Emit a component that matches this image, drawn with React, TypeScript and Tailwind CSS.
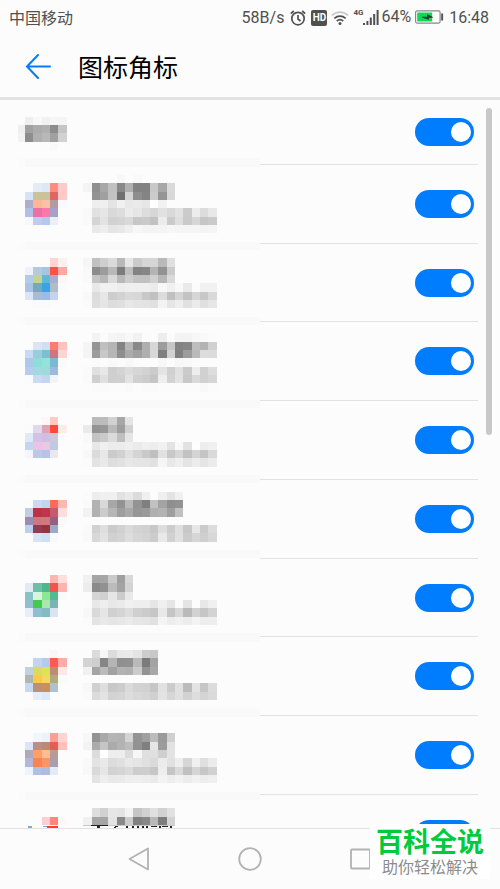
import React from "react";

type Strip = { row: number; icon?: string; text?: string };
type Item = { name: string; top: number; strips: Strip[]; band: number };

const CELL = 25 / 3;
const ICON_COL = 3;
const TEXT_COL = 10;

// Each token is one mosaic cell: two digits for a grey, six for a colour, "--" for none.
const items: Item[] = [
  {
    name: "应用 1",
    top: 165,
    band: 29,
    strips: [
      { row: 21, text: "-- -- -- -- f8 -- f9 -- -- fb" },
      { row: 22, icon: "-- e4ecf8 dde7f6 ff8a80 ffc9c7", text: "f4 8f a7 c0 88 b0 82 82 c8 a7 d9" },
      { row: 23, icon: "d4e3f5 c9c29a c9c29a dc6662 ffc9c7", text: "fb 93 a0 c2 70 d4 8d 84 cb 95 d8" },
      { row: 24, icon: "adaeca ffb694 f9c2a7 b59aa0 f8f9fd", text: "-- ee f0 e4 f1 e8 ea e6 ff f1" },
      { row: 25, icon: "b1c0e6 ec70a3 fb78a8 a7a0cb", text: "f9 e1 e6 d9 dd eb e6 dd d7 e1 d9 e2 cb ec dc e8" },
      { row: 26, icon: "f6f8fd bacfee b3caee eaeff8", text: "f9 d5 e3 d2 d4 d9 c7 ca c2 ec cb df ca d6 c6 ca" },
      { row: 27, text: "-- e9 ee e5 e8 ef f7 f4 f4 f4 f7 f5 f5 f5 f3 f5" },
    ],
  },
  {
    name: "应用 2",
    top: 244,
    band: 38,
    strips: [
      { row: 31, icon: "-- -- -- ffd4d2 fdf1f0", text: "f6 c1 cf da b8 e6 cb d6 d6 b9 df" },
      { row: 32, icon: "edf3f8 b3cae0 a5c5e0 ff5144 ffa8a3", text: "f9 8c 9c b8 7c be 83 87 b4 92 cb" },
      { row: 33, icon: "b2cbea c4d294 61b7d8 a9aecf fdf6f6", text: "f9 c5 b8 d8 b9 cc c2 c1 cf b7 d9" },
      { row: 34, icon: "abc3e3 74a8bb 38a3e9 aebdc9 fbfbfb", text: "-- e8 f1 f1 ed ef ef ef eb f7 f0 f8 e9 fb f1 f1" },
      { row: 35, icon: "dae5f6 a8bcd3 9cbce8 c4d4ea", text: "f9 dc e7 cd d2 d9 d7 c8 c0 dc c0 d4 c3 d6 c7 d9" },
      { row: 36, icon: "-- fa f9fafd", text: "fa de e5 dd df e7 e4 e3 e0 f3 e5 ee e1 eb e0 e6" },
    ],
  },
  {
    name: "应用 3",
    top: 322,
    band: 48,
    strips: [
      { row: 40, text: "-- f3 fb f5 f3 f8 f2 fb fc ed fb f3 f3 f7 f9 fb" },
      { row: 41, icon: "-- dae5f5 cfdff4 ff7a6f ffc2be", text: "f5 94 bf b4 83 b6 89 af d7 9c c5 82 86 bd b3 d0" },
      { row: 42, icon: "c9dbf2 9accdc 7bbfd0 cf7482 ffd5d3", text: "f4 9c c8 b6 8e ab a0 af d8 80 d2 80 9c ba dc db" },
      { row: 43, icon: "acc8ea 8bdfd8 92e3da 7ab9d5 fafafa", text: "-- fa fc f9 fb f8 fb fc fc f7 fc f7 f8 fb" },
      { row: 44, icon: "b5cced a1dae0 9fdcd9 9dbadd", text: "fa e0 e7 cf d4 dc d6 d2 cb e3 d0 e0 cb ed d1 dd" },
      { row: 45, icon: "fafbfd cadaf2 c2d5f1 f0f5fa", text: "fa cf df cf d0 e2 d0 cc c5 ee d2 e2 c8 d9 d0 d6" },
      { row: 46, text: "-- fa fa fb fb f9 fb fa fa fb fb fb fb fb f8 fb" },
    ],
  },
  {
    name: "应用 4",
    top: 401,
    band: 57,
    strips: [
      { row: 50, icon: "-- -- fcf6f5 ffc9c4", text: "-- bb bc d1 a7 e4" },
      { row: 51, icon: "fbfbfd e1d8ee e0a3b6 ff4938 ffece9", text: "ea 93 97 b9 9e d1" },
      { row: 52, icon: "e0e9f6 d3c2e6 d1bee4 cdc7da", text: "f9 c3 ca da bf e5" },
      { row: 53, icon: "c3d6f0 ebc4e5 edc6e3 bdcae6", text: "fb e7 f0 ec ec ef ea ef ed f1 e3 f8 e2 fd ed f0" },
      { row: 54, icon: "f5f6fb bac9eb b5c4e8 e9e8f1", text: "f8 db e8 cb d1 e0 d4 c9 bf e1 c8 d6 c2 d4 c4 d9" },
      { row: 55, text: "fb e3 e9 de e1 e7 e5 e4 e1 f6 e8 ee e4 ec e5 eb" },
    ],
  },
  {
    name: "应用 5",
    top: 480,
    band: 66,
    strips: [
      { row: 59, text: "fb ed f0 f0 e1 e9 dc f0 fc ef e3 f0" },
      { row: 60, icon: "fafbfd cbdaf1 c0d5f0 ff6a5d ffb7b2", text: "fa b2 d9 a7 92 b9 93 7f c1 a3 8f 92" },
      { row: 61, icon: "c2cde3 bd3148 be364b c25d70 fddedd", text: "f2 b1 cb b6 9e a9 96 9a b0 b3 9e c0" },
      { row: 62, icon: "9d8cb0 cf777d cf787d 966181 f8f9fb" },
      { row: 63, icon: "bccfeb 8f3c55 95343f a0a8c9", text: "fa d2 df cb d1 da d3 d1 c8 de cc df c7 e7 cb dc" },
      { row: 64, icon: "-- d8e4f4 cfdff5 f8f9fb", text: "f9 d8 e2 d1 d4 dd d6 d3 cc e9 d1 e0 cb d6 cf d8" },
    ],
  },
  {
    name: "应用 6",
    top: 559,
    band: 76,
    strips: [
      { row: 69, icon: "-- -- -- ffb5af ffdedb", text: "f1 a4 a6 ca 9f d8" },
      { row: 70, icon: "e3eaf6 6dc0a8 4eb78e ee564b ffb2ae", text: "ed 8b 92 bb a3 d3" },
      { row: 71, icon: "87c3c4 d7f5da 8ce893 53b990 fafafa", text: "-- d5 d0 e5 cb e8" },
      { row: 72, icon: "92bfd0 44cb4b a9e7b0 7bb4b4", text: "fb e8 ef e8 ea f0 ee ee e6 f0 e5 fb e4 fc e8 f0" },
      { row: 73, icon: "e8eef8 8dbfd0 82bbc2 dae3f2", text: "f8 d9 e5 d0 d4 dd d0 cb c6 e8 c5 d8 ba d2 c6 d3" },
      { row: 74, text: "fb e4 e9 e5 e7 ea e6 e5 e1 f4 ed f1 ec f3 ed ed" },
    ],
  },
  {
    name: "应用 7",
    top: 637,
    band: 85,
    strips: [
      { row: 78, icon: "-- -- -- fdf5f4", text: "-- db f7 dc e9 ea e4 cc c8" },
      { row: 79, icon: "fafbfd c3d4f0 b3cbec ff5a4c ffaba6", text: "d3 ce 86 b5 90 91 b9 7b a3" },
      { row: 80, icon: "c0d2e0 dcda5e dbe54c bb8d78 fde8e7", text: "f1 a5 bb a2 b3 b0 cb 93 a8" },
      { row: 81, icon: "adb5b5 f9ca4b f5d664 b2aa79 f9fafd" },
      { row: 82, icon: "c7d8f1 bc8f76 c9905e b2bfd2", text: "f8 d0 de c8 cc da d2 d1 c6 e1 cb e0 bb e3 c6 dc" },
      { row: 83, icon: "-- e7edf8 dfe8f6", text: "fa db e3 d3 d5 dd d8 d5 d0 e3 d6 e0 d2 dd d4 da" },
    ],
  },
  {
    name: "应用 8",
    top: 716,
    band: 95,
    strips: [
      { row: 88, icon: "-- f2f6fc ebf2fa ff9d97 ffd5d3", text: "f7 93 a9 b5 b3 d4 93 a0 bc 9a cf" },
      { row: 89, icon: "dae6f5 bd8e86 bb8b6b e75d55 ffbfbb", text: "f3 ab c5 ab b3 bc 92 80 e6 9c e2" },
      { row: 90, icon: "b1a8b9 ff9f62 febc93 b59d95", text: "-- dc ff ed ee dc f7 df e0 cf e3" },
      { row: 91, icon: "b0b9da f68454 fb9468 a89eac", text: "f9 e3 e9 dc e0 e8 e5 e0 da eb e1 ee d6 f0 df eb" },
      { row: 92, icon: "eff3fb b0c0e3 aebddd e4ebf7", text: "f8 d9 e5 d2 d5 da cd ce c6 ed c5 da c0 d5 c7 d1" },
      { row: 93, text: "-- e4 ee e9 ea ee ef ed ea f3 ee f2 ec f1 ed f0" },
    ],
  },
  {
    name: "应用 9",
    top: 795,
    band: 104,
    strips: [
      { row: 97, text: "-- dd d1 e6 e3 f3 c5 d1 e0 d1 e1" },
      { row: 98, icon: "-- -- f9cfcf ff857e fdf8f7", text: "f1 a5 a5 e3 89 cb 80 87 b8 7d d3" },
    ],
  },
];

const allSwitch: Item = {
  name: "全部",
  top: 100,
  band: 19,
  strips: [
    { row: 14, icon: "ef f8 f1 f6 f5" },
    { row: 15, icon: "a1 ab b0 8c c5" },
    { row: 16, icon: "8d b0 b8 a0 d1" },
    { row: 17, icon: "-- -- -- f9" },
  ],
};

function cells(source: string | undefined, row: number, firstCol: number) {
  if (!source) return null;
  return source.split(" ").map((token, i) => {
    if (token === "--") return null;
    return (
      <rect
        key={`${row}-${firstCol + i}`}
        x={(firstCol + i) * CELL}
        y={row * CELL}
        width={CELL}
        height={CELL}
        fill={`#${token.length === 2 ? token.repeat(3) : token}`}
      />
    );
  });
}

function Mosaic({ item, height, children }: { item: Item; height: number; children?: React.ReactNode }) {
  return (
    <svg
      width={260}
      height={height}
      viewBox={`0 ${item.top} 260 ${height}`}
      shapeRendering="crispEdges"
      className="block shrink-0 overflow-visible"
      aria-hidden="true"
    >
      <rect x={18} y={item.band * CELL} width={7} height={CELL} fill="#fbfbfb" />
      <rect x={25} y={item.band * CELL} width={235} height={CELL} fill="#f9f9f9" />
      {item.strips.map((s) => (
        <g key={s.row}>
          {cells(s.icon, s.row, ICON_COL)}
          {cells(s.text, s.row, TEXT_COL)}
        </g>
      ))}
      {children}
    </svg>
  );
}

function Toggle({ label }: { label: string }) {
  return (
    <input
      type="checkbox"
      role="switch"
      aria-label={label}
      defaultChecked
      className="relative h-7 w-[59px] shrink-0 cursor-pointer appearance-none rounded-full bg-gray-300 before:absolute before:top-1 before:left-1 before:size-5 before:rounded-full before:bg-white checked:bg-[#007dff] checked:before:right-[3px] checked:before:left-auto"
    />
  );
}

function ToggleCell({ label }: { label: string }) {
  return (
    <div className="mr-[22px] flex flex-1 items-center justify-end border-b border-[#e2e2e2] pr-1">
      <Toggle label={label} />
    </div>
  );
}

function StatusBar() {
  return (
    <div className="flex h-[35px] shrink-0 items-center pr-[11px] pl-[9px] text-base text-[#505050]">
      <span className="flex-1 pb-px font-['Noto_Sans_CJK_SC',sans-serif]">中国移动</span>
      <span>58B/s</span>
      <svg width="16" height="16" viewBox="0 0 16 16" className="ml-[6px]" fill="none" stroke="#505050" strokeWidth="1.7">
        <circle cx="8" cy="8.6" r="6.2" />
        <path d="M8 5v4l2.500 2M.8 3.700 3.800 1M15.200 3.700l-3-2.700" />
      </svg>
      <span className="ml-[5px] flex h-4 w-4 items-center justify-center rounded-xs bg-[#505050] text-[10px] font-bold text-white">
        HD
      </span>
      <svg width="18" height="16" viewBox="0 0 18 16" className="ml-1" fill="none" strokeWidth="1.7">
        <path d="M.9 5.500c4.700-4.600 11.500-4.600 16.200 0" stroke="#c9c9c9" />
        <path d="M3.400 8.300c3.300-3 7.900-3 11.200 0M5.800 11c1.900-1.700 4.500-1.700 6.400 0" stroke="#505050" />
        <circle cx="9" cy="13.600" r="1.500" fill="#505050" />
      </svg>
      <span className="ml-1 self-start pt-[8px] text-[8px] leading-[10px] font-bold">4G</span>
      <svg width="16" height="16" viewBox="0 0 16 16" fill="#505050">
        <path d="M0 13h2v2H0zM3.400 11h2v4h-2zM6.800 7.500h2V15h-2zM10.200 4h2v11h-2zM13.600 0h2v15h-2z" />
      </svg>
      <span className="ml-[2px] pb-[2px]">64%</span>
      <svg width="29" height="14" viewBox="0 0 29 14" className="mb-[2px] ml-1">
        <rect x=".6" y=".9" width="24.500" height="12.200" rx="1.500" fill="#fff" stroke="#888" strokeWidth="1.200" />
        <path d="M2.200 2.500h15v9h-15z" fill="#0dd957" />
        <path d="M7.500 7.200h5V4.800l5 2.500h-4v2z" fill="#333" stroke="#333" strokeWidth=".8" />
        <path d="M26.200 3.500h1.900v7h-1.900z" fill="#505050" />
      </svg>
      <time className="ml-[5px]">16:48</time>
    </div>
  );
}

export default function App() {
  return (
    <div className="flex h-screen flex-col overflow-hidden bg-[#fcfcfc] font-['Roboto','Noto_Sans_CJK_SC',sans-serif]">
      <header className="shrink-0 border-b-[3px] border-[#e2e2e2]">
        <StatusBar />
        <div className="flex h-[62px] items-center gap-[27px] pl-[25px]">
          <button type="button" aria-label="返回上一页" className="cursor-pointer">
            <svg width="26" height="26" viewBox="0 0 26 26" fill="none" stroke="#007dff" strokeWidth="2" strokeLinecap="round">
              <path d="M13 2 2 13.500 13 25M2 13.500h23" />
            </svg>
          </button>
          <h1 className="font-['Noto_Sans_CJK_SC',sans-serif] text-[25px] leading-8 text-black">图标角标</h1>
        </div>
      </header>

      <main className="relative min-h-0 flex-1 overflow-hidden">
        <ul>
          <li className="flex h-[65px]">
            <Mosaic item={allSwitch} height={65}>
              <path d="M18 125h7v8.333h-7z" fill="#efefef" />
              <path d="M18 133.333h7v8.333h-7z" fill="#f2f2f2" />
            </Mosaic>
            <ToggleCell label={allSwitch.name} />
          </li>
          {items.map((item) => (
            <li key={item.name} className="flex h-[79px] nth-[4n+3]:h-[78px]">
              <Mosaic item={item} height={79}>
                {item.top === 795 && (
                  <>
                    <path d="M83 825h92v1H83z" fill="#c8c8c8" />
                    <path
                      d="M91 825h17v1H91zM97 826h3v2h-3zM115 826h3v1h-3zM114 827h2v1h-2zM126 826h2v2h-2zM132 826h2v2h-2zM137 826h2v2h-2zM142 826h2v2h-2zM146 826h2v2h-2zM151 826h6v1h-6zM159 826h2v2h-2zM162 826h6v1h-6zM170 826h2v2h-2z"
                      fill="#222"
                    />
                    <path d="M47 826h11v2H47z" fill="#ff3b30" />
                    <path d="M28 826h4v2h-4zM43 826h4v1h-4z" fill="#83a6ea" />
                  </>
                )}
              </Mosaic>
              <ToggleCell label={item.name} />
            </li>
          ))}
        </ul>
        <div className="absolute top-2 right-2 h-[327px] w-[6px] rounded-full bg-[#c8c8c8]" />
      </main>

      <footer className="relative h-[61px] shrink-0 border-t border-[#e2e2e2]">
        <nav aria-label="系统导航" className="flex h-full items-center justify-center">
          <button type="button" aria-label="返回" className="flex w-[22%] cursor-pointer justify-center">
            <svg width="24" height="24" viewBox="0 0 24 24" fill="none" stroke="#b2b2b2" strokeWidth="1.800" strokeLinejoin="round">
              <path d="M20 1.500v21L1.500 12z" />
            </svg>
          </button>
          <button type="button" aria-label="主屏幕" className="flex w-[22%] cursor-pointer justify-center">
            <svg width="24" height="24" viewBox="0 0 24 24" fill="none" stroke="#b2b2b2" strokeWidth="1.800">
              <circle cx="12" cy="12" r="10.800" />
            </svg>
          </button>
          <button type="button" aria-label="最近任务" className="flex w-[22%] cursor-pointer justify-center">
            <svg width="24" height="24" viewBox="0 0 24 24" fill="none" stroke="#b2b2b2" strokeWidth="1.800">
              <rect x="3" y="2.500" width="19" height="19" rx="1" />
            </svg>
          </button>
        </nav>
        <div className="absolute right-[10px] bottom-[10px] flex h-[55px] w-[120px] flex-col items-center bg-white pt-1 font-['Liberation_Sans','Noto_Sans_CJK_SC',sans-serif] whitespace-nowrap">
          <span className="text-[27px] leading-[31px] font-bold text-[#00cb3c]">百科全说</span>
          <span className="text-base leading-[18px] text-[#8c8c8c]">助你轻松解决</span>
        </div>
      </footer>
    </div>
  );
}
